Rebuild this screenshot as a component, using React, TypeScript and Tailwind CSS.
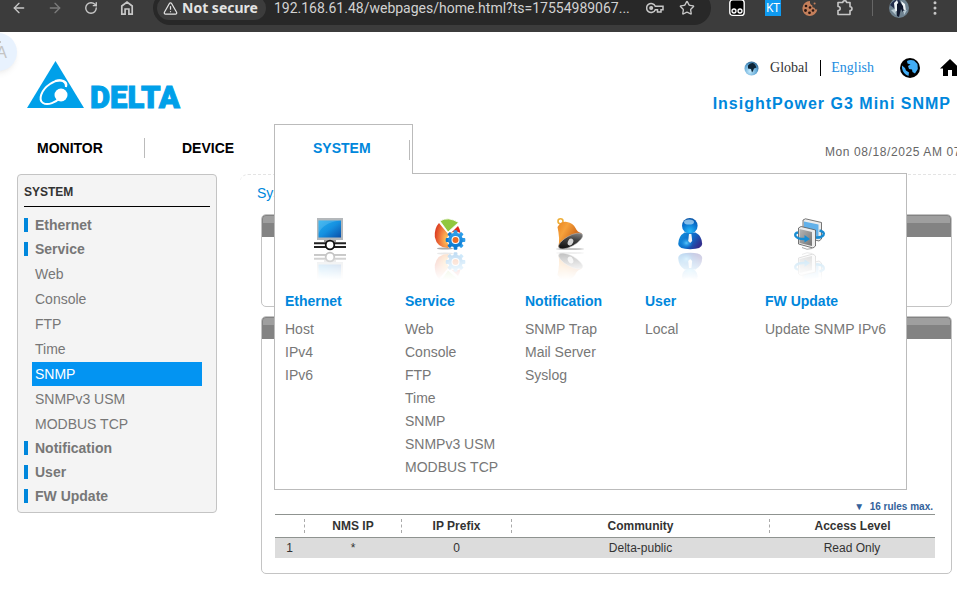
import { useId, type ReactNode } from "react";
import { ArrowLeft, ArrowRight, RotateCw, Star, TriangleAlert, EllipsisVertical } from "lucide-react";

/* ---------- Browser toolbar ---------- */

function HomeOutline() {
  return (
    <svg width="16" height="16" viewBox="0 0 16 16" fill="none" stroke="#c7c7c7" strokeWidth="1.7">
      <path d="M2.8 14.2V6L8 2l5.200 4v8.200H9.900V9H6.100v5.200z" />
    </svg>
  );
}

function KeyIcon() {
  return (
    <svg width="18" height="12" viewBox="0 0 18 12" fill="none" stroke="#c7c7c7" strokeWidth="1.500">
      <path d="M9.300 4.300A4.500 4.500 0 1 0 9.300 7.700H11.500V10H15V7.700H17V4.300z" />
      <circle cx="5.200" cy="6" r="1.300" fill="#c7c7c7" />
    </svg>
  );
}

function MonkeyIcon() {
  return (
    <svg width="16" height="18" viewBox="0 0 16 18">
      <rect x="0.800" y="0.800" width="14.400" height="15.600" rx="3" fill="#000" stroke="#fff" strokeWidth="1.400" />
      <circle cx="5" cy="12" r="2" fill="#222" stroke="#fff" strokeWidth="1.300" />
      <circle cx="11" cy="12" r="2" fill="#222" stroke="#fff" strokeWidth="1.300" />
    </svg>
  );
}

function CookieIcon() {
  return (
    <svg width="17" height="17" viewBox="0 0 17 17">
      <path d="M9 1a7.500 7.500 0 1 0 7.300 8.500c-1.500.4-2.600-.4-2.700-1.800-1.700.2-2.700-.9-2.300-2.400C9.500 4.800 8.600 3 9 1z" fill="#c47f5b" />
      <g fill="#2a1712">
        <circle cx="5" cy="6" r="1.300" />
        <circle cx="9" cy="7.500" r="1.300" />
        <circle cx="4.500" cy="10.500" r="1.400" />
        <circle cx="8.500" cy="12.800" r="1.400" />
        <circle cx="12" cy="10.500" r="1.300" />
        <circle cx="13.600" cy="3.400" r="1" fill="#c47f5b" />
      </g>
    </svg>
  );
}

function PuzzleIcon() {
  return (
    <svg width="18" height="18" viewBox="0 0 18 18" fill="none" stroke="#c7c7c7" strokeWidth="1.600" strokeLinejoin="round">
      <path d="M2 3.500h4.800c0-2.400 3.800-2.400 3.800 0H14v4.300c2.600 0 2.600 3.700 0 3.700v4H2v-4c2.900 0 2.900-4 0-4z" />
    </svg>
  );
}

function Avatar() {
  return (
    <svg width="20" height="20" viewBox="0 0 20 20">
      <circle cx="10" cy="10" r="10" fill="#6e8290" />
      <path d="M1 7Q5 1 10 1l2 5-6 5z" fill="#202b4b" />
      <path d="M5 5l3-3 2 5-1 5-3 2zM12 3l4 3 1 7-3-2z" fill="#eef3f6" />
      <path d="M8 6l3-2 3 4 1 8-3-5-2 8-2-1z" fill="#10182e" />
      <path d="M2 12l4-1 1 6M14 13l4-1-3 5z" fill="#b9cad3" />
    </svg>
  );
}

function BrowserBar() {
  const iconButton = "flex w-9 shrink-0 items-center justify-center";
  return (
    <div className="flex h-8 items-center overflow-hidden bg-[#3c3c3c] pb-4 pl-px font-['Noto_Sans',sans-serif]">
      <button aria-label="Back" className={iconButton}><ArrowLeft size={16} color="#c7c7c7" /></button>
      <button aria-label="Forward" className={iconButton}><ArrowRight size={16} color="#7b7b7b" /></button>
      <button aria-label="Reload" className={iconButton}><RotateCw size={14} color="#c7c7c7" strokeWidth={2.400} /></button>
      <button aria-label="Home" className={iconButton}><HomeOutline /></button>
      <div className="ml-2 flex h-[34px] min-w-0 flex-1 items-center rounded-full bg-[#282828] pl-1">
        <button className="flex h-6 shrink-0 items-center gap-1 whitespace-nowrap rounded-full bg-[#3c3c3c] pl-1.5 pr-2 text-[14px] font-bold leading-6 text-[#e3e3e3]">
          <TriangleAlert size={15} />
          Not secure
        </button>
        <input
          aria-label="Address"
          readOnly
          value="192.168.61.48/webpages/home.html?ts=17554989067..."
          className="ml-2 min-w-0 flex-1 bg-transparent font-['Roboto',sans-serif] text-[14px] text-[#d2d2d2] outline-none"
        />
        <button aria-label="Passwords" className="flex w-8 shrink-0 justify-center"><KeyIcon /></button>
        <button aria-label="Bookmark" className="mr-2 flex w-8 shrink-0 justify-center"><Star size={16} color="#c7c7c7" /></button>
      </div>
      <button aria-label="Scripts" className="ml-2 flex w-9 shrink-0 justify-center"><MonkeyIcon /></button>
      <button className={iconButton}>
        <span className="flex size-4 items-center justify-center bg-[#0f9af0] text-[12px] text-white">KT</span>
      </button>
      <button aria-label="Cookies" className={iconButton}><CookieIcon /></button>
      <button aria-label="Extensions" className={iconButton}><PuzzleIcon /></button>
      <span className="ml-[9px] h-4 w-px shrink-0 bg-[#666]" />
      <button aria-label="Profile" className="ml-2 flex w-9 shrink-0 justify-center"><Avatar /></button>
      <button aria-label="Menu" className={iconButton}><EllipsisVertical size={18} color="#c7c7c7" /></button>
      <span className="w-1 shrink-0" />
    </div>
  );
}

/* ---------- Header ---------- */

function Logo() {
  return (
    <svg width="158" height="56" viewBox="0 0 158 56" role="img" aria-label="Delta">
      <path d="M28.500 1L57 48H0z" fill="#00a0e9" />
      <path d="M39 27C39 20 32 18 23 24C14 30 11 40 16 43C21 46 29 42 33 38" fill="none" stroke="#fff" strokeWidth="2" />
      <path d="M39 27C41 21 34 19 28 21" fill="none" stroke="#fff" strokeWidth="2" />
      <circle cx="34" cy="35" r="6.500" fill="#fff" />
      <text x="63" y="48" fontSize="31" fontWeight="900" fill="#00a0e9" stroke="#00a0e9" strokeWidth="1" fontFamily="Roboto, sans-serif">DELTA</text>
    </svg>
  );
}

function SmallGlobe() {
  return (
    <svg width="15" height="15" viewBox="0 0 15 15">
      <defs>
        <radialGradient id="sea" cx="0.400" cy="0.700" r="0.800">
          <stop offset="0" stopColor="#c5ecff" />
          <stop offset="0.600" stopColor="#5fa5d3" />
          <stop offset="1" stopColor="#20507a" />
        </radialGradient>
      </defs>
      <circle cx="7.500" cy="7.500" r="7" fill="url(#sea)" />
      <path d="M4 4.500Q6 1.500 9 2l2 1.500 1.500 3-2.500 1-1 2.500L8 11.500 7 8 4 7.500z" fill="#0d2436" />
    </svg>
  );
}

function Globe() {
  return (
    <svg width="20" height="20" viewBox="0 0 20 20">
      <circle cx="10" cy="10" r="10" fill="#000" />
      <path d="M7 3Q10 1.500 14 2.500l3.500 3.500.3 5-2.800 4.500L12.500 14 12 11.500 9 11 8 8 10.500 6.500 7.500 5.500zM2 7.500L5 10l1 2.500 3 2L8.500 18Q3 16 2 10z" fill="#42adf5" />
    </svg>
  );
}

function House() {
  return (
    <svg width="20" height="18" viewBox="0 0 20 18">
      <path d="M10 0L0 9.500h3V17h5v-6h4v6h5V9.500h3z" fill="#000" />
    </svg>
  );
}

function Header() {
  return (
    <header className="flex justify-between">
      <a href="#home" className="ml-[27px] mt-7"><Logo /></a>
      <div className="flex flex-col items-end">
        <div className="-mr-[3px] mt-6 flex h-6 items-center font-['Liberation_Serif',serif] text-[14px] leading-4">
          <SmallGlobe />
          <a href="#global" className="ml-[11px] border-r border-black pr-3 text-[#333]">Global</a>
          <a href="#english" className="ml-2.5 text-[#1c8ce0]">English</a>
          <a href="#world" aria-label="World" className="ml-[26px]"><Globe /></a>
          <a href="#start" aria-label="Start page" className="ml-5"><House /></a>
        </div>
        <h1 className="mr-1.5 mt-3 text-[16px] font-bold leading-6 tracking-[1px] text-[#0087dc]">InsightPower G3 Mini SNMP</h1>
      </div>
    </header>
  );
}

/* ---------- Menu icons ---------- */

function Reflected({ children }: { children: ReactNode }) {
  const id = useId();
  return (
    <svg width="32" height="64" viewBox="0 0 32 64">
      <defs>
        <linearGradient id={id + "f"} x1="0" y1="0" x2="0" y2="1">
          <stop offset="0" stopColor="#fff" stopOpacity="0.280" />
          <stop offset="1" stopColor="#fff" stopOpacity="0" />
        </linearGradient>
        <mask id={id + "m"} maskUnits="userSpaceOnUse" x="0" y="32" width="32" height="32">
          <rect y="33" width="32" height="29" fill={`url(#${id}f)`} />
        </mask>
      </defs>
      <g id={id + "g"}>{children}</g>
      <g mask={`url(#${id}m)`}>
        <use href={`#${id}g`} transform="translate(0 66) scale(1 -1)" />
      </g>
    </svg>
  );
}

function EthernetArt() {
  return (
    <Reflected>
      <defs>
        <linearGradient id="screen" x1="0" y1="0" x2="1" y2="1">
          <stop offset="0" stopColor="#23b0f0" />
          <stop offset="0.500" stopColor="#1590e0" />
          <stop offset="1" stopColor="#0b4fa8" />
        </linearGradient>
      </defs>
      <rect x="3" y="0" width="26" height="22" fill="#b4b8bb" />
      <rect x="4.500" y="2.500" width="22.500" height="17" fill="url(#screen)" />
      <path d="M4.500 2.500H26Q8 5 4.500 16z" fill="#fff" opacity="0.150" />
      <path d="M10 22h12v2H10z" fill="#999" />
      <path d="M0 25.200h32M0 29h32" stroke="#222" strokeWidth="2" />
      <circle cx="16" cy="27" r="4.300" fill="#fff" stroke="#111" strokeWidth="1.800" />
    </Reflected>
  );
}

function ServiceArt() {
  return (
    <Reflected>
      <defs>
        <radialGradient id="pie" cx="0.900" cy="0.650" r="0.900">
          <stop offset="0" stopColor="#ffc95a" />
          <stop offset="0.450" stopColor="#f48a45" />
          <stop offset="1" stopColor="#dc3f22" />
        </radialGradient>
        <linearGradient id="gear" x1="0" y1="0" x2="0" y2="1">
          <stop offset="0" stopColor="#2f9fea" />
          <stop offset="1" stopColor="#0a78d0" />
        </linearGradient>
      </defs>
      <ellipse cx="11" cy="30.500" rx="8" ry="1" fill="#888" opacity="0.700" />
      <path d="M5 5L14 16v14Q3 30 .8 19 .3 10 5 5z" fill="url(#pie)" />
      <path d="M14 16l8-4v8l-8 10z" fill="#f08a33" />
      <path d="M18 14l6-6q2 3 2.500 7z" fill="#e0291b" />
      <path d="M6 3Q14-2 24.500 4.500L14 14z" fill="#91c73e" stroke="#fff" strokeWidth="0.800" />
      <g transform="translate(21.500 22)">
        <circle r="8.600" fill="#fff" opacity="0.900" />
        <g fill="url(#gear)">
          {[0, 45, 90, 135].map((a) => (
            <rect key={a} x="-1.900" y="-9.800" width="3.800" height="19.600" rx="1" transform={`rotate(${a})`} />
          ))}
          <circle r="7.300" />
        </g>
        <circle r="4" fill="#fff" />
        <circle r="3" fill="#ee6b24" />
      </g>
    </Reflected>
  );
}

function BellArt() {
  return (
    <Reflected>
      <defs>
        <linearGradient id="bell" x1="0" y1="0" x2="1" y2="0.600">
          <stop offset="0" stopColor="#e98420" />
          <stop offset="0.350" stopColor="#f6a23c" />
          <stop offset="1" stopColor="#c04f08" />
        </linearGradient>
        <linearGradient id="mouth" x1="0" y1="0.500" x2="1" y2="0">
          <stop offset="0" stopColor="#111" />
          <stop offset="0.500" stopColor="#444" />
          <stop offset="1" stopColor="#a5a5a5" />
        </linearGradient>
      </defs>
      <ellipse cx="16" cy="31" rx="14" ry="0.900" fill="#999" opacity="0.600" />
      <circle cx="6.500" cy="3.300" r="2.500" fill="none" stroke="#eeae38" strokeWidth="1.600" />
      <path d="M3.500 9Q7 3 13 4q6 1 8.500 6Q23 14 28 15.500L4.500 29Q6 20 3.500 9z" fill="url(#bell)" />
      <ellipse cx="16.600" cy="23" rx="13.500" ry="5.200" transform="rotate(-29 16.600 23)" fill="url(#mouth)" stroke="#b9b9b9" strokeWidth="0.500" />
      <ellipse cx="16.500" cy="24" rx="2.600" ry="3.600" transform="rotate(25 16.500 24)" fill="#d5d5d5" />
    </Reflected>
  );
}

function UserArt() {
  return (
    <Reflected>
      <defs>
        <linearGradient id="body" x1="0" y1="0" x2="1" y2="0.500">
          <stop offset="0" stopColor="#1594df" />
          <stop offset="0.600" stopColor="#0c6ac8" />
          <stop offset="1" stopColor="#32308f" />
        </linearGradient>
        <radialGradient id="head" cx="0.500" cy="0.850" r="0.900">
          <stop offset="0" stopColor="#27bafa" />
          <stop offset="0.600" stopColor="#0871ce" />
          <stop offset="1" stopColor="#0a4f9d" />
        </radialGradient>
        <radialGradient id="shine" cx="0.500" cy="0.500" r="0.500">
          <stop offset="0" stopColor="#58c6fb" />
          <stop offset="1" stopColor="#1691e5" stopOpacity="0" />
        </radialGradient>
      </defs>
      <path d="M4.200 26Q4.500 18 10.500 14.500h11Q28 18 28.200 26 28 31.200 16.200 31.200 4.500 31.200 4.200 26z" fill="url(#body)" />
      <ellipse cx="12.500" cy="25" rx="6.500" ry="5.500" fill="url(#shine)" />
      <path d="M15 16h2.400l.8 7-2 2-2-2z" fill="#f3f3f3" />
      <circle cx="15.800" cy="7.800" r="7.800" fill="url(#head)" />
      <ellipse cx="15" cy="4" rx="5" ry="2.600" fill="#d8f2ff" opacity="0.600" />
    </Reflected>
  );
}

function UpdateArt() {
  return (
    <Reflected>
      <defs>
        <linearGradient id="case" x1="0" y1="0" x2="1" y2="1">
          <stop offset="0" stopColor="#b5b5b5" />
          <stop offset="1" stopColor="#757575" />
        </linearGradient>
      </defs>
      <path d="M9 2L11.500.8 27.500 4.500V21L25 23 9 19z" fill="#ececec" stroke="#555" strokeWidth="0.800" />
      <path d="M10 3.500L24.500 6.500V21L10 18z" fill="#62b1ea" />
      <path d="M25.500 12.500q5.500 1.500 4 4.500-2 3-7.500 2.500" fill="none" stroke="#188bd0" strokeWidth="2.400" />
      <path d="M4.500 10L7 8.500 21.500 12v16L19 30 4.500 26z" fill="#ededed" stroke="#555" strokeWidth="0.800" />
      <path d="M5.500 11l12.500 3v14L5.500 25z" fill="url(#case)" />
      <path d="M8 29.500q5 3 10 1" fill="none" stroke="#aaa" />
      <path d="M4 14.500Q.5 15 1.500 18q2 3.500 10 3" fill="none" stroke="#198dd3" strokeWidth="2.400" />
      <path d="M10.500 17l5.500 4-5.500 3.500z" fill="#198dd3" />
    </Reflected>
  );
}

/* ---------- Navigation ---------- */

const menu: { title: string; art: ReactNode; items: string[] }[] = [
  { title: "Ethernet", art: <EthernetArt />, items: ["Host", "IPv4", "IPv6"] },
  { title: "Service", art: <ServiceArt />, items: ["Web", "Console", "FTP", "Time", "SNMP", "SNMPv3 USM", "MODBUS TCP"] },
  { title: "Notification", art: <BellArt />, items: ["SNMP Trap", "Mail Server", "Syslog"] },
  { title: "User", art: <UserArt />, items: ["Local"] },
  { title: "FW Update", art: <UpdateArt />, items: ["Update SNMP IPv6"] },
];

function SystemMenu() {
  return (
    <div className="absolute -left-px top-full z-10 -mt-px flex h-[317px] w-[633px] border border-[#bbb] bg-white pl-2.5 pt-11">
      {menu.map((m) => (
        <section key={m.title} className="w-30 shrink-0">
          <div className="flex w-[90px] justify-center">{m.art}</div>
          <h2 className="mb-[5px] mt-2 text-[14px] font-bold leading-[23px] text-[#0087dc]">{m.title}</h2>
          <ul>
            {m.items.map((i) => (
              <li key={i} className="whitespace-nowrap text-[14px] font-normal leading-[23px] text-[#777]">
                <a href="#item">{i}</a>
              </li>
            ))}
          </ul>
        </section>
      ))}
    </div>
  );
}

function Nav() {
  return (
    <nav className="flex items-start text-[14px] font-bold text-black">
      <div className="mt-3.5 flex h-5 w-[145px] items-center border-r border-[#bbb] pl-[37px]">
        <a href="#monitor">MONITOR</a>
      </div>
      <div className="mt-3.5 flex h-5 w-[129px] items-center pl-[37px]">
        <a href="#device">DEVICE</a>
      </div>
      <div className="relative h-[50px] w-[139px] border border-b-0 border-[#bbb]">
        <SystemMenu />
        <div className="relative z-20 flex h-[49px] items-center bg-white pr-0.5">
          <a href="#system" className="flex-1 pb-0.5 pl-[38px] text-[#0087dc]">SYSTEM</a>
          <span className="h-5 w-px bg-[#bbb]" />
        </div>
      </div>
      <p className="-mr-1 ml-auto mt-5 whitespace-nowrap text-[12px] font-normal leading-4 tracking-wider text-[#666]">
        Mon 08/18/2025 AM 07
      </p>
    </nav>
  );
}

function Sidebar() {
  return (
    <aside className="ml-[17px] h-[339px] w-[200px] shrink-0 rounded border border-[#c4c4c4] bg-[#f4f4f4] px-1.5 text-[14px] text-[#777]">
      <h2 className="mb-1.5 border-b border-black pb-1.5 pt-[9px] text-[12px] font-bold leading-4 text-[#333]">SYSTEM</h2>
      {menu.map((m) => (
        <div key={m.title}>
          <a href="#group" className="flex h-6 items-center gap-[7px] font-bold">
            <span className="h-3.5 w-1 bg-[#0087dc]" />
            {m.title}
          </a>
          {m.title === "Service" &&
            m.items.map((i) => (
              <a
                key={i}
                href="#page"
                className={`ml-2 mr-2 mt-px flex h-6 items-center pl-[3px] ${i === "SNMP" ? "bg-[#0394f2] text-white" : ""}`}
              >
                {i}
              </a>
            ))}
        </div>
      ))}
    </aside>
  );
}

/* ---------- Content ---------- */

function Panel({ children }: { children: ReactNode }) {
  return (
    <section className="overflow-hidden rounded-[5px] border border-[#c4c4c4]">
      <div className="h-[22px] bg-[#838383] px-px pt-px">
        <div className="h-[7px] rounded-t-[3px] bg-[#9f9f9f]" />
      </div>
      {children}
    </section>
  );
}

const columns = ["", "NMS IP", "IP Prefix", "Community", "Access Level"];

function RulesTable() {
  return (
    <table className="w-full table-fixed border-collapse text-center text-[12px] text-[#333]">
      <colgroup>
        <col className="w-[30px]" />
        <col className="w-[97px]" />
        <col className="w-[110px]" />
        <col />
        <col className="w-[165px]" />
      </colgroup>
      <thead>
        <tr className="border-y border-[#8f9390]">
          {columns.map((c, i) => (
            <th key={c} className="h-[23px] p-0">
              <div className={`h-3.5 leading-[14px] ${i < 4 ? "border-r border-dashed border-[#aaa]" : ""}`}>{c}</div>
            </th>
          ))}
        </tr>
      </thead>
      <tbody>
        <tr className="h-5 bg-[#dcdcdc]">
          {["1", "*", "0", "Delta-public", "Read Only"].map((c) => (
            <td key={c} className="p-0 pr-px leading-5">{c}</td>
          ))}
        </tr>
      </tbody>
    </table>
  );
}

export default function App() {
  return (
    <div className="overflow-hidden bg-white font-['Liberation_Sans',Arial,sans-serif]">
      <BrowserBar />
      <div className="relative pb-10">
        <button
          aria-label="Translate"
          className="absolute -left-[21px] top-px flex size-[38px] flex-col items-end justify-center rounded-full bg-[#e8f2fe] pr-2.5 text-[16px] leading-5 text-[#c4c4c4] shadow-md shadow-black/5"
        >
          <span className="mr-1.5 h-0.5 w-3 bg-[#c4c4c4]" />
          A
        </button>
        <Header />
        <div className="mt-2">
          <Nav />
        </div>
        <div className="flex items-start">
          <Sidebar />
          <main className="ml-[23px] min-w-0 flex-1 rounded-tl-lg border-t border-dashed border-[#e4e4e4] pl-[17px] pt-2">
            <a href="#system" className="block text-[14px] leading-5 text-[#0087dc]">System</a>
            <div className="mr-[5px] mt-[11px] flex flex-col gap-[9px] pl-1">
              <Panel>
                <div className="h-[69px]" />
              </Panel>
              <Panel>
                <div className="pb-[15px] pl-[13px] pr-4 pt-[161px]">
                  <p className="pr-0.5 text-right text-[10px] font-bold leading-[14px] text-[#33629b]">▼&nbsp; 16 rules max.</p>
                  <RulesTable />
                </div>
              </Panel>
            </div>
          </main>
        </div>
      </div>
    </div>
  );
}
